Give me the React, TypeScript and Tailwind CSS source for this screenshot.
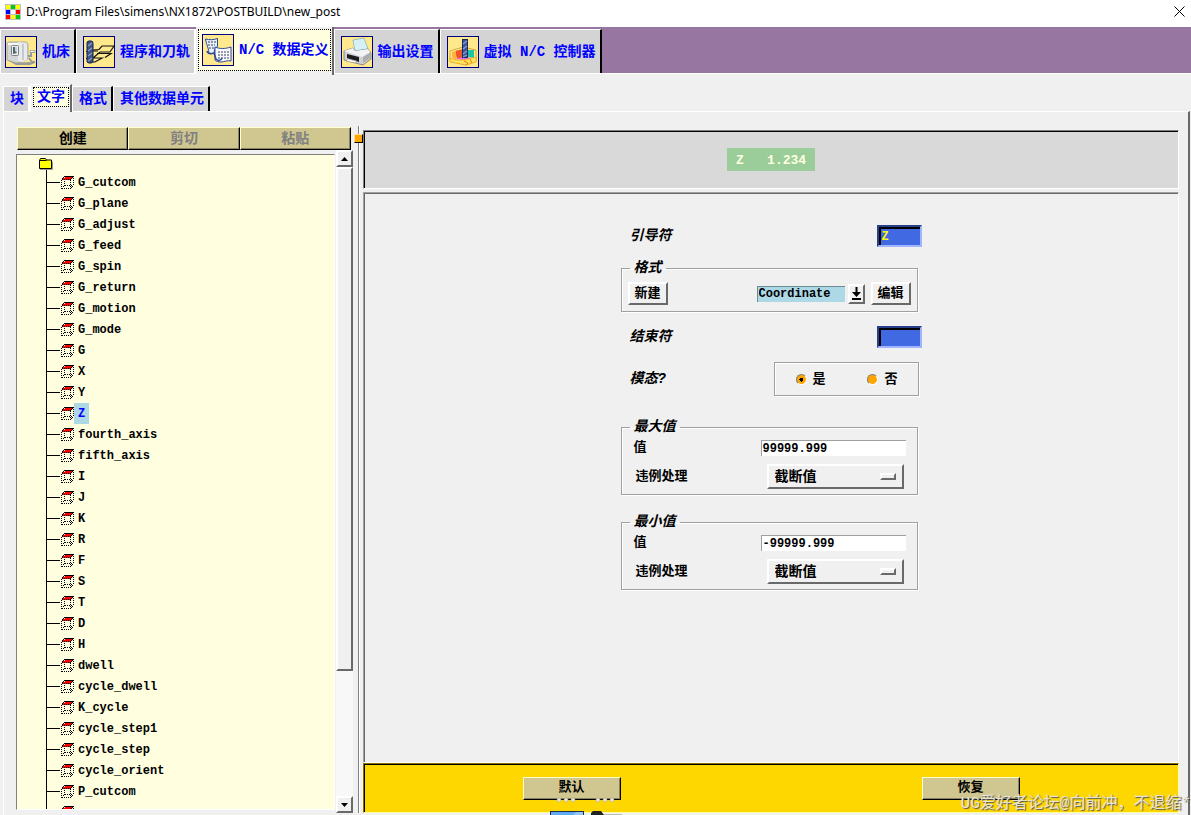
import React from 'react';

const WORDS = [
  'G_cutcom', 'G_plane', 'G_adjust', 'G_feed', 'G_spin', 'G_return', 'G_motion', 'G_mode',
  'G', 'X', 'Y', 'Z', 'fourth_axis', 'fifth_axis', 'I', 'J', 'K', 'R', 'F', 'S', 'T', 'D', 'H',
  'dwell', 'cycle_dwell', 'K_cycle', 'cycle_step1', 'cycle_step', 'cycle_orient', 'P_cutcom',
];

const raised = 'border-2 border-t-white border-l-white border-r-[#696969] border-b-[#696969] bg-[#f0f0f0]';
const khaki =
  'border border-t-[#ffffcc] border-l-[#ffffcc] border-r-black border-b-black bg-[#d0c690] shadow-[inset_-1px_-1px_0_#8a8460]';
const groove = 'border border-[#a0a0a0] shadow-[1px_1px_0_#fff,inset_1px_1px_0_#fff]';

function AppIcon() {
  const colors = ['#ff0', '#0c0', '#ff0', '#00f', '#fff', '#f00', '#f00', '#ff0', '#0c0'];
  return (
    <svg width="16" height="16" viewBox="0 0 16 16" className="shrink-0">
      <rect width="16" height="16" fill="#c0c0c0" />
      {colors.map((c, i) => (
        <rect key={i} x={1 + (i % 3) * 5} y={1 + Math.floor(i / 3) * 5} width="4" height="4" fill={c} />
      ))}
    </svg>
  );
}

function IconFrame({ children }: { children: React.ReactNode }) {
  return (
    <svg width="32" height="32" viewBox="0 0 32 32" className="shrink-0">
      <rect x="0.5" y="0.5" width="31" height="31" fill="#ffe98c" stroke="#000080" />
      {children}
    </svg>
  );
}

function MachineIcon() {
  return (
    <IconFrame>
      <path d="M2 24l10 3 12-1 6 1-5 2H11z" fill="#9a9c98" />
      <path d="M2 8c0-2 1-2 3-2h15c2 0 3 1 3 3v14l-5 3-7 1-9-3z" fill="#d3d5d6" stroke="#8f9395" strokeWidth="0.7" />
      <path d="M3 7h18v2H3z" fill="#fafafa" />
      <path d="M13 6l9 1v17l-4 2-5-1z" fill="#e8eaeb" />
      <rect x="6.500" y="9.500" width="7" height="10" rx="1" fill="#eceeef" stroke="#7d8284" />
      <path d="M8 11h4v6l-4 1z" fill="#526469" />
      <path d="M10 11h2v6l-2-2z" fill="#bdd8dc" />
      <path d="M18 8v16" stroke="#a5a9ab" />
      <path d="M23 20h3v-4h4M24 22l3 4h3" fill="none" stroke="#9299a0" strokeWidth="2" />
      <path d="M25 14.500h5v2h-5z" fill="#eef0f1" stroke="#83898e" strokeWidth="0.6" />
    </IconFrame>
  );
}

function ProgramIcon() {
  return (
    <IconFrame>
      <path d="M10 14l6-.5L19 10h12M14 17.500h14l-6 4M10 22l7-6h10l4-6M10 22h9l-7 4H9" fill="none" stroke="#111" strokeWidth="1.2" />
      <path d="M10 15h5M3 15l2 2M3 22l2 2" stroke="#111" />
      <rect x="4" y="5" width="6" height="22" rx="2" fill="#3c5488" stroke="#14204c" />
      <path d="M5 10l4-3M5 15l4-3M5 20l4-3M5 25l4-3" stroke="#8d9ecb" strokeWidth="1.3" />
    </IconFrame>
  );
}

function DataIcon() {
  return (
    <IconFrame>
      <path d="M3.500 5c4 1 8 1 12-.5v8c-2 1-4 3-3 7h-6c1-4-2-8-3-14.500z" fill="#e9effb" stroke="#2c4a94" />
      <path d="M13 13c5 2 10 2 16 0v14c-4-1-7 1-10 1s-5-1-6-2z" fill="#f7f9ff" stroke="#2c4a94" />
      <path d="M6 8h8M6 11h7M7 14h5" stroke="#33415f" strokeDasharray="2 1" />
      <path d="M16 18h11M16 21h11M16 24h11" stroke="#33415f" strokeDasharray="2 1" />
      <path d="M5 17c1 3 4 3 7 2l2 6c2 2 5 2 6-1" fill="none" stroke="#2c4a94" strokeWidth="1.5" />
    </IconFrame>
  );
}

function PrinterIcon() {
  return (
    <IconFrame>
      <path d="M12 4l11-2 4 11-13 3z" fill="#d5f1f7" stroke="#84a9b8" strokeWidth="0.7" />
      <path d="M3 15l9-3 2 3 13-2 3 4v6l-8 6-19-5z" fill="#cfd0d2" stroke="#66696d" strokeWidth="0.7" />
      <path d="M3 15l9-3 2 3 13-2 2 3-8 5z" fill="#f3f3f4" />
      <path d="M22 21l7-4v5l-7 5z" fill="#aaacae" />
      <path d="M6 18l12 3v5L6 22z" fill="#1c1c1c" />
      <path d="M7 23l9 2-2 2-9-2z" fill="#fff" stroke="#777" strokeWidth="0.5" />
    </IconFrame>
  );
}

function ControllerIcon() {
  return (
    <IconFrame>
      <path d="M3 15l13-4 13 3v11l-10 4L3 25z" fill="#ffe98c" stroke="#c89a28" strokeWidth="0.8" />
      <path d="M8 15l8-2v9l-6 1z" fill="#f0562c" />
      <path d="M5 16l4-1v9l-4-3z" fill="#ffb13c" />
      <path d="M21 14h6v8l-6-1z" fill="#1fc4a8" />
      <path d="M8 23l9-2 8 1-7 2z" fill="#f46bd8" />
      <path d="M3 22l7 2h8l11-3v5l-10 3L3 26z" fill="#ffe25c" stroke="#e0a020" strokeWidth="0.7" />
      <path d="M17 25l4 2-2 2M23 23l2 4" fill="none" stroke="#e87c10" />
      <rect x="15.500" y="3.500" width="5" height="18" fill="#3f5694" stroke="#182858" />
      <path d="M16 8l4-3M16 13l4-3M16 18l4-3M16 21l4-2" stroke="#8fa0d8" strokeWidth="1.2" />
    </IconFrame>
  );
}

function FolderIcon() {
  return (
    <svg width="15" height="12" viewBox="0 0 15 12" className="ml-[21px] mt-[3px] block">
      <path d="M2 11.500h12.500v-8" fill="none" stroke="#999" />
      <path d="M1.500 2.500l1-2h5l1 1.500h5v8.500h-12z" fill="#ff0" stroke="#000" />
      <path d="M1.500 2.500h7" stroke="#000" />
    </svg>
  );
}

function WordIcon() {
  return (
    <svg width="13" height="13" viewBox="0 0 13 13" className="ml-px shrink-0" shapeRendering="crispEdges">
      <path d="M4 1h8v1h-1v1h-1v1H1V3h1V2h2z" fill="#f00" />
      <path d="M3 .5h10M2 1.500h1M1 2.500h1M11 1.500h1M10 2.500h1" stroke="#000" />
      <path
        d="M.5 4v9M9.500 4v9M12.500 2v8M1 3.500h9M1 12.500h9M3.500 5v5M4 9.500h8M11.500 10v1M10.500 11v1M2.500 10v1"
        fill="none"
        stroke="#000"
        strokeDasharray="1 1"
      />
    </svg>
  );
}

interface TabProps {
  label: string;
  active?: boolean;
  // the tab left of the active one has no dark edge
  flat?: boolean;
}

function MainTab({ icon, label, active, flat }: TabProps & { icon: React.ReactNode }) {
  if (active) {
    return (
      <button
        role="tab"
        aria-selected="true"
        className="z-10 -mb-[2px] flex items-stretch border-r-2 border-r-[#696969] bg-[#f0f0f0] p-[2px] pb-1 pr-px"
      >
        <span className="flex items-center gap-[5px] whitespace-pre border border-dotted border-black bg-[#ffffe0] pl-[3px] pr-px">
          {icon}
          {label}
        </span>
      </button>
    );
  }
  return (
    <button
      role="tab"
      aria-selected="false"
      className={`mt-[2px] flex items-center gap-[5px] whitespace-pre border-l border-r-2 border-t border-l-white border-t-white bg-[#d4d4d4] pl-[6px] pr-1 pt-px first:pl-1 ${flat ? 'border-r-white' : 'border-r-black'}`}
    >
      {icon}
      {label}
    </button>
  );
}

function SubTab({ label, active, flat }: TabProps) {
  if (active) {
    return (
      <button
        role="tab"
        aria-selected="true"
        className="z-10 -mb-px flex border-l border-r-2 border-t border-l-white border-r-[#696969] border-t-white bg-[#f0f0f0] p-[2px] pb-[5px] pr-px"
      >
        <span className="flex items-center border border-dotted border-black bg-[#ffffe0] px-[3px]">{label}</span>
      </button>
    );
  }
  return (
    <button
      role="tab"
      aria-selected="false"
      className={`mt-[2px] border-l border-r-2 border-t border-l-white border-t-white bg-[#d4d4d4] pl-[6px] pr-1 ${flat ? 'border-r-white' : 'border-r-black'}`}
    >
      {label}
    </button>
  );
}

function BlueInput({ id, value }: { id: string; value: string }) {
  return (
    <input
      id={id}
      defaultValue={value}
      className="h-[22px] w-[45px] border-2 border-b-[#a0b4ff] border-l-[#27408b] border-r-[#a0b4ff] border-t-[#27408b] bg-[#4169e1] pl-[3px] pt-px text-[12px] text-[#ffff00] shadow-[inset_2px_2px_0_#000] outline-none"
    />
  );
}

function LimitGroup({ id, title, value }: { id: string; title: string; value: string }) {
  return (
    <fieldset className={`mr-1 pb-[5px] pl-2 pr-[11px] ${groove}`}>
      <legend className="px-1 italic leading-[14px]">{title}</legend>
      <div className="mt-[6px] flex items-center justify-between pl-1">
        <label htmlFor={`${id}-value`} className="text-[13px] leading-4">值</label>
        <input
          id={`${id}-value`}
          defaultValue={value}
          className="h-4 w-[145px] border-l border-t border-[#a0a0a0] bg-white pl-px text-[12px] outline-none"
        />
      </div>
      <div className="mt-2 flex items-center justify-between pl-[6px] pr-[2px]">
        <label htmlFor={`${id}-action`} className="text-[13px] leading-4">违例处理</label>
        <div className="relative flex">
          <select id={`${id}-action`} className={`h-[25px] w-[137px] appearance-none pl-[6px] outline-none ${raised}`}>
            <option>截断值</option>
          </select>
          <span className={`pointer-events-none absolute right-2 top-[9px] h-[7px] w-4 ${raised}`} />
        </div>
      </div>
    </fieldset>
  );
}

function ModalRadio({ label, checked }: { label: string; checked?: boolean }) {
  return (
    <label className="flex items-center gap-[6px] pt-px text-[13px] leading-4">
      <input
        type="radio"
        name="modal"
        defaultChecked={checked}
        className="size-[11px] appearance-none rounded-full border border-b-white border-l-[#808080] border-r-white border-t-[#808080] bg-[#ffa500] checked:bg-[radial-gradient(circle,#000_0_2px,#ffa500_2px)]"
      />
      {label}
    </label>
  );
}

function WordTree() {
  return (
    <div className="mb-[3px] mt-1 min-w-0 flex-1 overflow-hidden border border-b-white border-l-[#808080] border-r-white border-t-[#808080] bg-[#ffffe0]">
      <FolderIcon />
      <ul className="ml-[29px] border-l border-black pt-[2px]">
        {WORDS.map((word) => (
          <li key={word} className="flex h-[21px] items-center">
            <span className="h-px w-[13px] bg-black" />
            <WordIcon />
            <button
              className={
                word === 'Z'
                  ? 'h-[21px] bg-[#add8e6] px-1 pt-[2px] text-[12px] leading-[19px] text-[#0000ff]'
                  : 'h-[21px] px-1 pt-[2px] text-[12px] leading-[19px] text-black'
              }
            >
              {word}
            </button>
          </li>
        ))}
        <li className="flex h-[21px] items-center">
          <span className="h-px w-[13px] bg-black" />
          <WordIcon />
        </li>
      </ul>
    </div>
  );
}

function ScrollBar() {
  return (
    <div className="ml-px mr-px flex w-[17px] flex-col bg-[#f8f8f8]">
      <button aria-label="向上" className={`flex h-[17px] shrink-0 items-center justify-center ${raised}`}>
        <svg width="7" height="4" viewBox="0 0 7 4"><path d="M0 4l3.500-4L7 4z" /></svg>
      </button>
      <div className={`h-[504px] min-h-0 ${raised}`} />
      <div className="flex-1" />
      <button aria-label="向下" className={`flex h-[17px] shrink-0 items-center justify-center ${raised}`}>
        <svg width="7" height="4" viewBox="0 0 7 4"><path d="M0 0l3.500 4L7 0z" /></svg>
      </button>
    </div>
  );
}

function WordForm() {
  return (
    <form className="mx-auto flex w-[301px] flex-col pt-8">
      <div className="flex items-center justify-between pl-[9px]">
        <label htmlFor="leader" className="italic">引导符</label>
        <BlueInput id="leader" value="Z" />
      </div>

      <fieldset className={`mr-1 mt-[14px] px-[6px] pb-[6px] ${groove}`}>
        <legend className="ml-[2px] px-1 italic leading-[14px]">格式</legend>
        <div className="mt-[7px] flex items-center">
          <button type="button" className={`h-[23px] w-10 text-[13px] leading-4 ${raised}`}>新建</button>
          <input
            aria-label="格式"
            defaultValue="Coordinate"
            className="ml-auto h-4 w-[88px] border-l border-t border-[#6d8a94] bg-[#add8e6] pl-px text-[12px] outline-none"
          />
          <button type="button" aria-label="选择" className={`ml-[3px] flex h-5 w-[17px] items-center justify-center ${raised}`}>
            <svg width="9" height="13" viewBox="0 0 9 13"><path d="M3.500 0h2v5H9L4.500 10 0 5h3.500zM0 11h9v2H0z" /></svg>
          </button>
          <button type="button" className={`ml-[6px] h-[23px] w-10 text-[13px] leading-4 ${raised}`}>编辑</button>
        </div>
      </fieldset>

      <div className="mt-[14px] flex items-center justify-between pl-[9px]">
        <label htmlFor="trailer" className="italic">结束符</label>
        <BlueInput id="trailer" value="" />
      </div>

      <div className="mr-[3px] mt-[14px] flex items-center justify-between pl-[9px]">
        <span className="italic">模态?</span>
        <div role="radiogroup" aria-label="模态" className={`flex h-[34px] w-[145px] items-center justify-between pl-[21px] pr-5 ${groove}`}>
          <ModalRadio label="是" checked />
          <ModalRadio label="否" />
        </div>
      </div>

      <div className="mt-6 flex flex-col gap-5">
        <LimitGroup id="max" title="最大值" value="99999.999" />
        <LimitGroup id="min" title="最小值" value="-99999.999" />
      </div>
    </form>
  );
}

export default function App() {
  return (
    <div className="relative flex h-screen flex-col overflow-hidden bg-[#f0f0f0] font-['Liberation_Mono','Noto_Sans_CJK_SC',monospace] text-[14px] font-bold leading-5 text-black">
      <header className="flex h-[27px] shrink-0 items-center bg-white pb-1 pl-[5px] pr-[6px]">
        <AppIcon />
        <h1 className="ml-[5px] font-['Noto_Sans','Noto_Sans_CJK_SC',sans-serif] text-[12px] font-normal">
          D:\Program Files\simens\NX1872\POSTBUILD\new_post
        </h1>
        <button aria-label="关闭" className="ml-auto">
          <svg width="11" height="11" viewBox="0 0 11 11"><path d="M.5.5l10 10M10.500.5l-10 10" stroke="#000" /></svg>
        </button>
      </header>

      <nav role="tablist" className="flex h-[46px] shrink-0 bg-[#9776a2] text-[#0000ff]">
        <MainTab icon={<MachineIcon />} label="机床" />
        <MainTab icon={<ProgramIcon />} label="程序和刀轨" flat />
        <MainTab icon={<DataIcon />} label="N/C 数据定义" active />
        <MainTab icon={<PrinterIcon />} label="输出设置" />
        <MainTab icon={<ControllerIcon />} label="虚拟 N/C 控制器" />
      </nav>

      <main className="flex min-h-0 flex-1 flex-col border-t border-white pl-[3px] pr-px pt-[10px]">
        <div role="tablist" className="flex h-[27px] shrink-0 text-[#0000ff]">
          <SubTab label="块" flat />
          <SubTab label="文字" active />
          <SubTab label="格式" />
          <SubTab label="其他数据单元" />
        </div>

        <div className="flex min-h-0 flex-1 border-l border-r-2 border-t border-l-white border-r-[#696969] border-t-white pb-[2px] pl-3 pr-[9px]">
          <aside className="flex w-[338px] shrink-0 flex-col pt-[15px]">
            <div className="ml-px mr-[3px] grid h-[23px] shrink-0 grid-cols-3">
              <button className={khaki}>创建</button>
              <button disabled className={`text-[#808080] ${khaki}`}>剪切</button>
              <button disabled className={`text-[#808080] ${khaki}`}>粘贴</button>
            </div>
            <div className="flex min-h-0 flex-1">
              <WordTree />
              <ScrollBar />
            </div>
          </aside>

          <div className="relative mt-[14px] flex w-[9px] shrink-0 justify-center">
            <span className="w-[2px] border-l border-r border-l-[#808080] border-r-white" />
            <span className="absolute left-0 top-2 size-[9px] border border-b-black border-l-[#ffe0a0] border-r-black border-t-[#ffe0a0] bg-[#ffa500]" />
          </div>

          <section className="flex min-w-0 flex-1 flex-col pt-[18px]">
            <div className="flex h-[59px] shrink-0 items-center justify-center border border-b-white border-l-[#808080] border-r-white border-t-[#808080] bg-[#d9d9d9] shadow-[inset_1px_1px_0_#000]">
              <output className="whitespace-pre bg-[#9bcd9b] px-[9px] pb-px pt-[3px] text-[13px] leading-[19px] text-[#ffffe0]">
                Z   1.234
              </output>
            </div>
            <div className="mt-[3px] min-h-0 flex-1 border border-b-white border-l-[#a0a0a0] border-r-white border-t-[#a0a0a0] shadow-[inset_1px_1px_0_#696969]">
              <WordForm />
            </div>
            <footer className="flex h-[50px] shrink-0 items-center justify-around border border-b-[#ffffa0] border-l-[#8b7500] border-r-[#ffffa0] border-t-[#8b7500] bg-[#ffd700] px-2 shadow-[inset_1px_1px_0_#000]">
              <button className={`h-[23px] w-[98px] text-[13px] leading-4 ${khaki}`}>默认</button>
              <button className={`h-[23px] w-[98px] text-[13px] leading-4 ${khaki}`}>恢复</button>
            </footer>
          </section>
        </div>
      </main>

      <svg width="74" height="18" viewBox="0 0 74 18" className="absolute bottom-0 left-[549px]" aria-hidden="true">
        {[10, 17, 24, 49, 56, 63].map((x) => (
          <circle key={x} cx={x} cy="3" r="2" fill="#ece6d2" stroke="#b0a890" strokeWidth="0.5" />
        ))}
        <rect x="1.500" y="14.500" width="33" height="6" fill="#62aaf2" stroke="#1f3044" />
        <path d="M24 18l3-3h7v3z" fill="#94c6fa" />
        <path d="M42 18v-2l2-2h8l3 4z" fill="#222" />
        <path d="M55 17.500h18" stroke="#bbb" />
      </svg>
      <p className="absolute -bottom-px right-0 whitespace-nowrap text-[16px] font-normal leading-6 text-[#e8e4d4] [text-shadow:1px_1px_1px_#555]">
        UG爱好者论坛@向前冲，不退缩*
      </p>
    </div>
  );
}
